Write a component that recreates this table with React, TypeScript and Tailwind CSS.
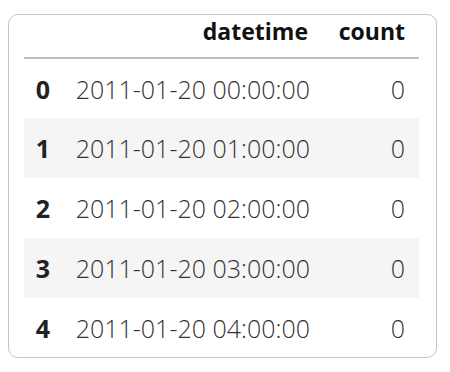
const rows = [
  { idx: 0, datetime: '2011-01-20 00:00:00', count: 0 },
  { idx: 1, datetime: '2011-01-20 01:00:00', count: 0 },
  { idx: 2, datetime: '2011-01-20 02:00:00', count: 0 },
  { idx: 3, datetime: '2011-01-20 03:00:00', count: 0 },
  { idx: 4, datetime: '2011-01-20 04:00:00', count: 0 },
];

export default function App() {
  return (
    <div className="w-[450px] h-[372px] bg-white pt-[14px] pl-[8px] font-['Open_Sans',sans-serif]">
      {/* Card */}
      <div className="w-[429px] h-[344px] border border-[#c4c4c4] rounded-[10px] overflow-hidden px-[15px]">
        <table className="w-[395px] table-fixed border-collapse leading-[28px]">
          <colgroup>
            <col className="w-[38px]" />
            <col className="w-[260px]" />
            <col className="w-[97px]" />
          </colgroup>
          <thead>
            <tr className="h-[43px] border-b-2 border-[#c0c0c0]">
              <th />
              <th className="text-right text-[23px] font-bold text-[#111] pr-[14px] pb-[12px] align-bottom">datetime</th>
              <th className="text-right text-[23px] font-bold text-[#111] pr-[14px] pb-[12px] align-bottom">count</th>
            </tr>
          </thead>
          <tbody>
            {rows.map((r) => (
              <tr key={r.idx} className={r.idx % 2 === 1 ? 'h-[60px] bg-[#f5f5f5]' : 'h-[60px] bg-white'}>
                <th className="text-right text-[25px] font-bold text-[#222] pr-[12px]">{r.idx}</th>
                <td className="text-right text-[25px] font-light text-[#333] pr-[12px]">{r.datetime}</td>
                <td className="text-right text-[25px] font-light text-[#333] pr-[14px]">{r.count}</td>
              </tr>
            ))}
          </tbody>
        </table>
      </div>
    </div>
  );
}
